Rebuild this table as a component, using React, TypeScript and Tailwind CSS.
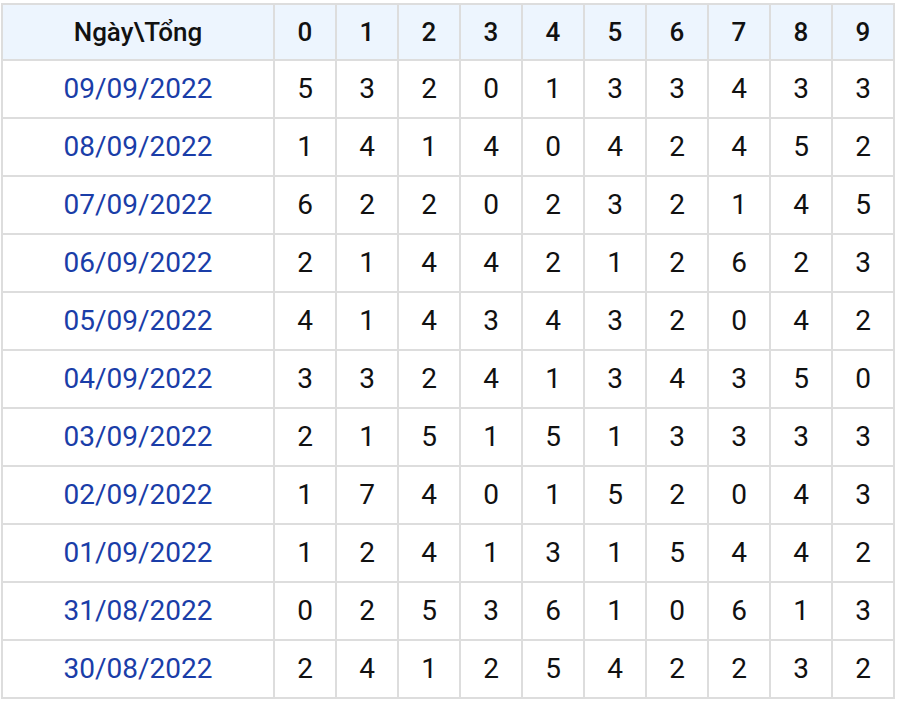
import React from "react";

const rows: [string, number[]][] = [
  ["09/09/2022", [5, 3, 2, 0, 1, 3, 3, 4, 3, 3]],
  ["08/09/2022", [1, 4, 1, 4, 0, 4, 2, 4, 5, 2]],
  ["07/09/2022", [6, 2, 2, 0, 2, 3, 2, 1, 4, 5]],
  ["06/09/2022", [2, 1, 4, 4, 2, 1, 2, 6, 2, 3]],
  ["05/09/2022", [4, 1, 4, 3, 4, 3, 2, 0, 4, 2]],
  ["04/09/2022", [3, 3, 2, 4, 1, 3, 4, 3, 5, 0]],
  ["03/09/2022", [2, 1, 5, 1, 5, 1, 3, 3, 3, 3]],
  ["02/09/2022", [1, 7, 4, 0, 1, 5, 2, 0, 4, 3]],
  ["01/09/2022", [1, 2, 4, 1, 3, 1, 5, 4, 4, 2]],
  ["31/08/2022", [0, 2, 5, 3, 6, 1, 0, 6, 1, 3]],
  ["30/08/2022", [2, 4, 1, 2, 5, 4, 2, 2, 3, 2]],
];

const digits = [0, 1, 2, 3, 4, 5, 6, 7, 8, 9];

export default function App() {
  return (
    <div className="h-[702px] w-[900px] overflow-hidden bg-white pl-[1px] pt-[3px] font-['Roboto',sans-serif]">
      <table className="w-[894px] table-fixed border-collapse">
        <colgroup>
          <col className="w-[272px]" />
          {digits.map((d) => (
            <col key={d} className="w-[62px]" />
          ))}
        </colgroup>
        <thead>
          <tr className="h-[56px] bg-[#edf5fe]">
            <th className="border-2 border-[#dddddd] text-center text-[26px] font-medium text-[#111]">
              Ngày\Tổng
            </th>
            {digits.map((d) => (
              <th
                key={d}
                className="border-2 border-[#dddddd] text-center text-[26px] font-medium text-[#111]"
              >
                {d}
              </th>
            ))}
          </tr>
        </thead>
        <tbody>
          {rows.map(([date, vals]) => (
            <tr key={date} className="h-[58px]">
              <td className="border-2 border-[#dddddd] text-center text-[28px] text-[#1a3da8]">
                {date}
              </td>
              {vals.map((v, i) => (
                <td
                  key={i}
                  className="border-2 border-[#dddddd] text-center text-[28px] text-[#111]"
                >
                  {v}
                </td>
              ))}
            </tr>
          ))}
        </tbody>
      </table>
    </div>
  );
}
